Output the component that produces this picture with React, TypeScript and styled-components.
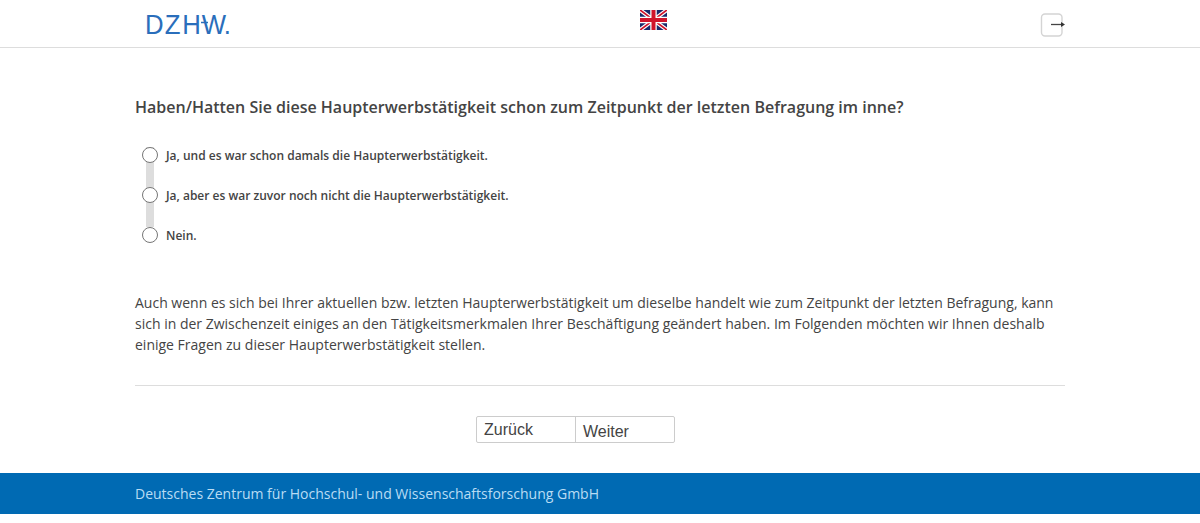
import React from "react";
import styled, { createGlobalStyle } from "styled-components";

const Global = createGlobalStyle`
  html, body { margin: 0; padding: 0; background: #fff; }
  body { font-family: "Open Sans", sans-serif; color: #444; overflow: hidden; }
`;

const Page = styled.div`
  width: 1200px;
  height: 523px;
  display: flex;
  flex-direction: column;
`;

const Header = styled.header`
  height: 47px;
  border-bottom: 1px solid #ddd;
  display: grid;
  grid-template-columns: 505px 27px 1fr;
  padding: 0 135px;
`;

const LogoBox = styled.div`
  padding: 8px 0 0 10px;
`;

const FlagBox = styled.div`
  padding-top: 10px;
`;

const ExitBox = styled.div`
  display: flex;
  justify-content: flex-end;
  padding-top: 13px;
`;

const Main = styled.main`
  height: 425px;
  padding: 0 135px;
  display: flex;
  flex-direction: column;
`;

const Question = styled.h1`
  margin: 48px 0 0;
  font-size: 16px;
  line-height: 22px;
  font-weight: 600;
  color: #444;
`;

const Options = styled.div`
  position: relative;
  margin: 17px 0 0 7px;
  display: flex;
  flex-direction: column;
`;

const Rail = styled.div`
  position: absolute;
  left: 4px;
  top: 12px;
  width: 8px;
  height: 80px;
  background: #ddd;
`;

const Option = styled.label`
  position: relative;
  height: 40px;
  display: flex;
  align-items: center;
  gap: 8px;
  font-size: 12px;
  font-weight: 600;
  color: #444;
`;

const Radio = styled.span`
  width: 16px;
  height: 16px;
  box-sizing: border-box;
  border: 1px solid #767676;
  border-radius: 50%;
  background: #fff;
  flex: none;
`;

const Text = styled.p`
  margin: 37px 0 0;
  font-size: 14px;
  line-height: 21px;
  color: #444;
`;

const Rule = styled.hr`
  margin: 30px 0 0;
  border: 0;
  border-top: 1px solid #ddd;
`;

const Buttons = styled.div`
  margin: 30px 0 0 341px;
  width: 199px;
  height: 27px;
  box-sizing: border-box;
  border: 1px solid #ccc;
  border-radius: 2px;
  display: flex;
`;

const NavButton = styled.div<{ $down?: boolean }>`
  flex: 1;
  padding: ${(p) => (p.$down ? "5px 0 0 7px" : "3px 0 0 7px")};
  font-family: "Liberation Sans", Arial, sans-serif;
  font-size: 16px;
  line-height: 20px;
  color: #444;
  & + & { border-left: 1px solid #ccc; }
`;

const Footer = styled.footer`
  height: 41px;
  background: #006ab3;
  padding: 0 135px;
  display: flex;
  align-items: center;
  font-size: 14px;
  color: #b9dcf3;
`;

const Logo = () => (
  <svg width="96" height="34" viewBox="0 0 96 34">
    <g transform="scale(0.92 1)">
      <text
        x="0 21.6 40.6 61.6 85.5"
        y="26"
        fontFamily="'Liberation Sans', Arial, sans-serif"
        fontSize="28"
        fill="#2a6ebb"
      >
        DZHW.
      </text>
    </g>
    <path d="M56 14.5H63" stroke="#2a6ebb" strokeWidth="1.5" />
  </svg>
);

const Flag = () => (
  <svg width="27" height="20" viewBox="0 0 27 20">
    <rect width="27" height="20" fill="#1a2a6c" />
    <path d="M0 0L27 20M27 0L0 20" stroke="#fff" strokeWidth="4" />
    <path d="M0 0L27 20M27 0L0 20" stroke="#d0142c" strokeWidth="1.8" />
    <path d="M13.5 0V20M0 10H27" stroke="#fff" strokeWidth="6.5" />
    <path d="M13.5 0V20M0 10H27" stroke="#d0142c" strokeWidth="4" />
  </svg>
);

const Exit = () => (
  <svg width="26" height="24" viewBox="0 0 26 24">
    <rect x="2.5" y="1" width="20.5" height="22" rx="3.5" fill="none" stroke="#d4d4d4" strokeWidth="1.4" />
    <path d="M12 11.5H23" stroke="#444" strokeWidth="1.3" />
    <path d="M22 9L26 11.5L22 14Z" fill="#333" />
  </svg>
);

export default function App() {
  return (
    <Page>
      <Global />
      <Header>
        <LogoBox><Logo /></LogoBox>
        <FlagBox><Flag /></FlagBox>
        <ExitBox><Exit /></ExitBox>
      </Header>
      <Main>
        <Question>Haben/Hatten Sie diese Haupterwerbstätigkeit schon zum Zeitpunkt der letzten Befragung im inne?</Question>
        <Options>
          <Rail />
          <Option><Radio />Ja, und es war schon damals die Haupterwerbstätigkeit.</Option>
          <Option><Radio />Ja, aber es war zuvor noch nicht die Haupterwerbstätigkeit.</Option>
          <Option><Radio />Nein.</Option>
        </Options>
        <Text>
          Auch wenn es sich bei Ihrer aktuellen bzw. letzten Haupterwerbstätigkeit um dieselbe handelt wie zum Zeitpunkt der letzten Befragung, kann sich in der Zwischenzeit einiges an den Tätigkeitsmerkmalen Ihrer Beschäftigung geändert haben. Im Folgenden möchten wir Ihnen deshalb einige Fragen zu dieser Haupterwerbstätigkeit stellen.
        </Text>
        <Rule />
        <Buttons>
          <NavButton>Zurück</NavButton>
          <NavButton $down>Weiter</NavButton>
        </Buttons>
      </Main>
      <Footer>Deutsches Zentrum für Hochschul- und Wissenschaftsforschung GmbH</Footer>
    </Page>
  );
}
